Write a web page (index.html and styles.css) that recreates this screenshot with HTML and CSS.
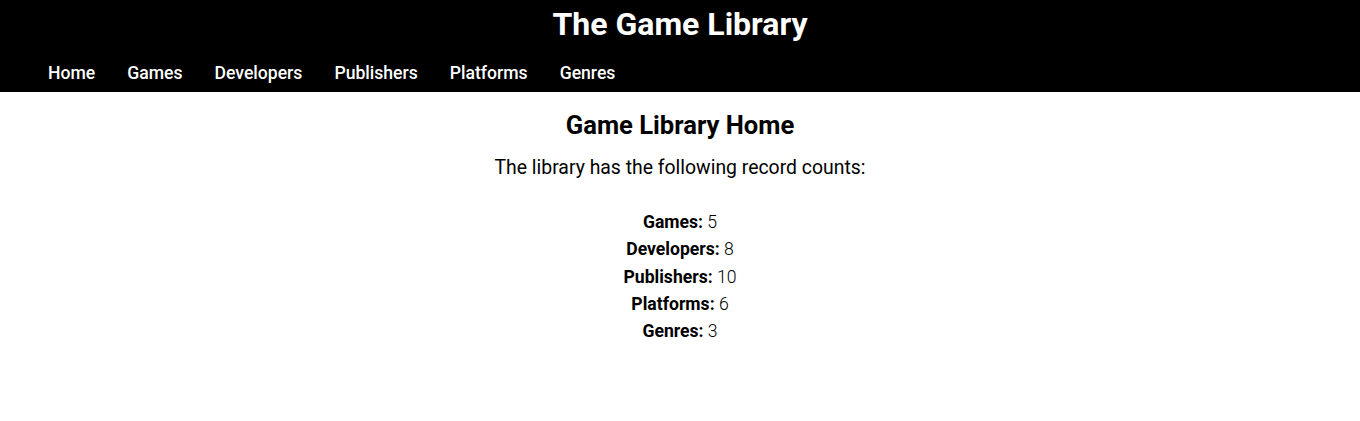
FILE: index.html
```html
<!DOCTYPE html>
<html>
<head>
<meta charset="utf-8">
<title>The Game Library</title>
<link rel="stylesheet" href="styles.css">
</head>
<body>
<header class="site-header">
  <h1 class="site-title">The Game Library</h1>
  <nav class="site-nav">
    <a href="#">Home</a>
    <a href="#">Games</a>
    <a href="#">Developers</a>
    <a href="#">Publishers</a>
    <a href="#">Platforms</a>
    <a href="#">Genres</a>
  </nav>
</header>
<main class="content">
  <h2 class="page-title">Game Library Home</h2>
  <p class="intro">The library has the following record counts:</p>
  <ul class="counts">
    <li><strong>Games:</strong> 5</li>
    <li><strong>Developers:</strong> 8</li>
    <li><strong>Publishers:</strong> 10</li>
    <li><strong>Platforms:</strong> 6</li>
    <li><strong>Genres:</strong> 3</li>
  </ul>
</main>
</body>
</html>
```
FILE: styles.css
```css
body {
  margin: 0;
  font-family: Roboto, "Liberation Sans", sans-serif;
  color: #000;
  background: #fff;
}
.site-header {
  background: #000;
  color: #fff;
  height: 92px;
  box-sizing: border-box;
  padding-top: 5px;
}
.site-title {
  margin: 0;
  text-align: center;
  font-size: 32px;
  font-weight: 700;
  line-height: 38px;
}
.site-nav {
  display: flex;
  gap: 32px;
  padding-left: 48px;
  margin-top: 18px;
}
.site-nav a {
  color: #fff;
  text-decoration: none;
  font-size: 17.6px;
  font-weight: 500;
  line-height: 24px;
}
.content {
  text-align: center;
}
.page-title {
  margin: 18px 0 0;
  font-size: 25.6px;
  font-weight: 700;
  line-height: 30px;
}
.intro {
  margin: 16px 0 0;
  font-size: 19.4px;
  line-height: 24px;
}
.counts {
  list-style: none;
  margin: 29px 0 0;
  padding: 0;
  font-size: 17.6px;
  font-weight: 300;
  line-height: 27.25px;
}
.counts strong {
  font-weight: 700;
}
```
